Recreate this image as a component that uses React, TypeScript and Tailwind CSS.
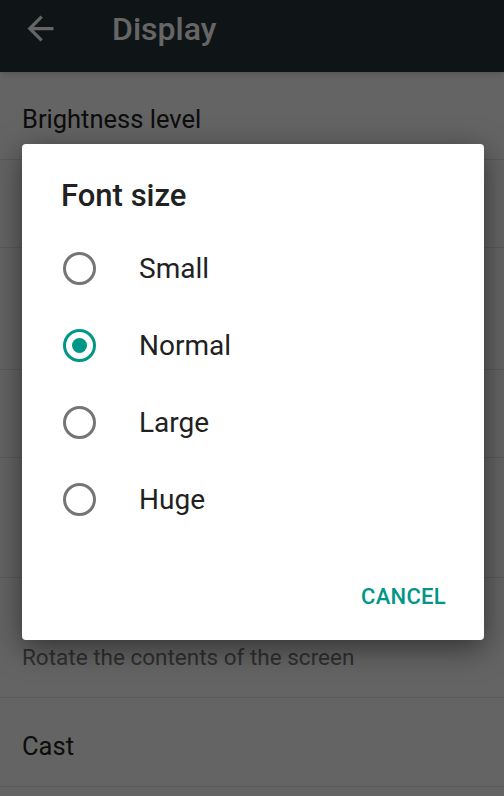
import { useState } from "react"

const options = ["Small", "Normal", "Large", "Huge"]

function Radio({ checked }: { checked: boolean }) {
  return (
    <span
      className={
        checked
          ? "flex h-[33px] w-[33px] items-center justify-center rounded-full border-[3px] border-[#009688]"
          : "flex h-[33px] w-[33px] items-center justify-center rounded-full border-[3px] border-[#757575]"
      }
    >
      {checked && <span className="h-[15px] w-[15px] rounded-full bg-[#009688]" />}
    </span>
  )
}

export default function App() {
  const [size, setSize] = useState("Normal")
  return (
    <div className="relative h-[796px] w-[504px] overflow-hidden bg-[#fafafa] font-['Roboto',sans-serif]">
      <header className="relative z-10 h-[72px] bg-[#263238] shadow-md">
        <div className="flex h-[57px] items-center">
          <svg viewBox="0 0 24 24" className="ml-[21px] h-[39px] w-[39px] fill-white">
            <path d="M20 11H7.83l5.59-5.59L12 4l-8 8 8 8 1.41-1.41L7.83 13H20v-2z" />
          </svg>
          <h1 className="ml-[52px] text-[32px] font-medium text-white">Display</h1>
        </div>
      </header>

      {/* settings list, mostly covered by the dialog */}
      <div className="flex flex-col">
        <div className="flex h-[88px] items-center border-b border-[#e0e0e0] px-[22px] pt-[6px]">
          <span className="text-[25.5px] leading-[32px] text-[#212121]">Brightness level</span>
        </div>
        <div className="h-[88px] border-b border-[#e0e0e0]" />
        <div className="h-[122px] border-b border-[#e0e0e0]" />
        <div className="h-[88px] border-b border-[#e0e0e0]" />
        <div className="h-[120px] border-b border-[#e0e0e0]" />
        <div className="flex h-[120px] flex-col justify-end border-b border-[#e0e0e0] px-[22px] pb-[25px]">
          <span className="text-[22.5px] leading-[30px] text-[#757575]">
            Rotate the contents of the screen
          </span>
        </div>
        <div className="flex h-[89px] items-center border-b border-[#e0e0e0] px-[22px] pt-[8px]">
          <span className="text-[25.5px] leading-[32px] text-[#212121]">Cast</span>
        </div>
      </div>

      <div className="absolute inset-0 z-20 flex items-start bg-black/60 pl-[22px] pt-[144px]">
        <div className="flex h-[496px] w-[462px] flex-col rounded-[4px] bg-white shadow-[0_8px_30px_rgba(0,0,0,0.5)]">
          <h2 className="pl-[39px] pt-[34px] text-[31px] font-medium leading-[36px] text-[#212121]">
            Font size
          </h2>
          <div className="mt-[16px] flex flex-col">
            {options.map((o) => (
              <button
                key={o}
                onClick={() => setSize(o)}
                className="flex h-[77px] items-center pl-[41px] text-left"
              >
                <Radio checked={size === o} />
                <span className="ml-[43px] text-[28px] text-[#212121]">{o}</span>
              </button>
            ))}
          </div>
          <div className="mt-auto flex justify-end pb-[31px] pr-[38px]">
            <button className="text-[22px] font-medium leading-[24px] tracking-[0.3px] text-[#009688]">
              CANCEL
            </button>
          </div>
        </div>
      </div>
    </div>
  )
}
